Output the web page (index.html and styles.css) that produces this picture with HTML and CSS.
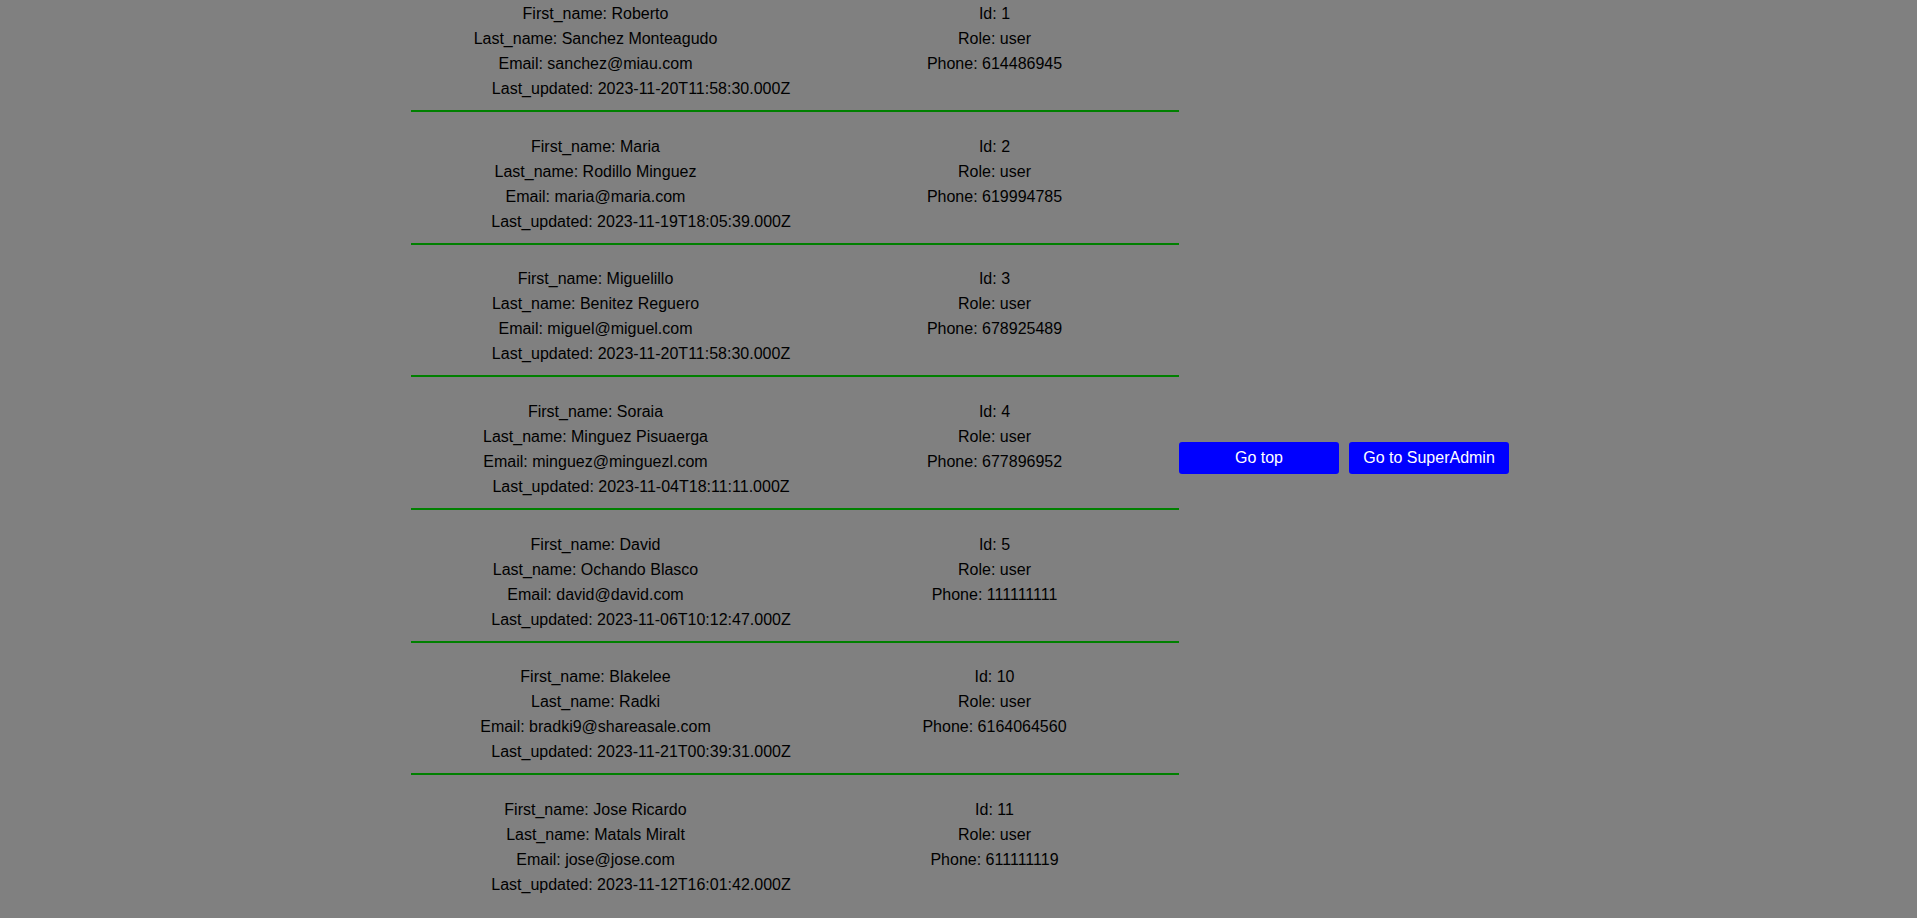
FILE: index.html
```html
<!DOCTYPE html>
<html lang="en">
<head>
<meta charset="utf-8">
<title>Users</title>
<link rel="stylesheet" href="styles.css">
</head>
<body>
<div class="page">
  <div class="list">
    <div class="record">
      <div class="fields">
        <div class="col"><div>First_name: Roberto</div><div>Last_name: Sanchez Monteagudo</div><div>Email: sanchez@miau.com</div></div>
        <div class="col"><div>Id: 1</div><div>Role: user</div><div>Phone: 614486945</div></div>
      </div>
      <div class="updated">Last_updated: 2023-11-20T11:58:30.000Z</div>
    </div>
    <div class="record">
      <div class="fields">
        <div class="col"><div>First_name: Maria</div><div>Last_name: Rodillo Minguez</div><div>Email: maria@maria.com</div></div>
        <div class="col"><div>Id: 2</div><div>Role: user</div><div>Phone: 619994785</div></div>
      </div>
      <div class="updated">Last_updated: 2023-11-19T18:05:39.000Z</div>
    </div>
    <div class="record">
      <div class="fields">
        <div class="col"><div>First_name: Miguelillo</div><div>Last_name: Benitez Reguero</div><div>Email: miguel@miguel.com</div></div>
        <div class="col"><div>Id: 3</div><div>Role: user</div><div>Phone: 678925489</div></div>
      </div>
      <div class="updated">Last_updated: 2023-11-20T11:58:30.000Z</div>
    </div>
    <div class="record">
      <div class="fields">
        <div class="col"><div>First_name: Soraia</div><div>Last_name: Minguez Pisuaerga</div><div>Email: minguez@minguezl.com</div></div>
        <div class="col"><div>Id: 4</div><div>Role: user</div><div>Phone: 677896952</div></div>
      </div>
      <div class="updated">Last_updated: 2023-11-04T18:11:11.000Z</div>
    </div>
    <div class="record">
      <div class="fields">
        <div class="col"><div>First_name: David</div><div>Last_name: Ochando Blasco</div><div>Email: david@david.com</div></div>
        <div class="col"><div>Id: 5</div><div>Role: user</div><div>Phone: 111111111</div></div>
      </div>
      <div class="updated">Last_updated: 2023-11-06T10:12:47.000Z</div>
    </div>
    <div class="record">
      <div class="fields">
        <div class="col"><div>First_name: Blakelee</div><div>Last_name: Radki</div><div>Email: bradki9@shareasale.com</div></div>
        <div class="col"><div>Id: 10</div><div>Role: user</div><div>Phone: 6164064560</div></div>
      </div>
      <div class="updated">Last_updated: 2023-11-21T00:39:31.000Z</div>
    </div>
    <div class="record">
      <div class="fields">
        <div class="col"><div>First_name: Jose Ricardo</div><div>Last_name: Matals Miralt</div><div>Email: jose@jose.com</div></div>
        <div class="col"><div>Id: 11</div><div>Role: user</div><div>Phone: 611111119</div></div>
      </div>
      <div class="updated">Last_updated: 2023-11-12T16:01:42.000Z</div>
    </div>
  </div>
  <div class="actions">
    <button class="btn" type="button">Go top</button>
    <button class="btn" type="button">Go to SuperAdmin</button>
  </div>
</div>
</body>
</html>
```
FILE: styles.css
```css
html, body {
  margin: 0;
  padding: 0;
}

body {
  background: #808080;
  color: #000;
  font-family: "Liberation Sans", Arial, sans-serif;
  font-size: 16px;
  overflow: hidden;
}

.page {
  display: flex;
  justify-content: center;
  align-items: flex-start;
  height: 915px;
}

.list {
  width: 768px;
  margin-left: 3px;
  flex: none;
}

.record {
  padding-top: 1px;
  padding-bottom: 9px;
  border-bottom: 2px solid #008000;
  margin-bottom: 20.67px;
}

.record:last-child {
  border-bottom: none;
  margin-bottom: 0;
}

.fields {
  display: grid;
  grid-template-columns: 399px 399px;
  margin-left: -15px;
  width: 798px;
}

.col {
  text-align: center;
  line-height: 25px;
}

.updated {
  width: 490px;
  margin-left: -15px;
  text-align: center;
  line-height: 25px;
}

.actions {
  display: flex;
  gap: 10px;
  align-self: center;
  flex: none;
}

.btn {
  width: 160px;
  height: 32px;
  padding: 0;
  border: none;
  border-radius: 3px;
  background: #0000ff;
  color: #fff;
  font-family: "Liberation Sans", Arial, sans-serif;
  font-size: 16px;
  line-height: 18px;
  cursor: pointer;
}
```
